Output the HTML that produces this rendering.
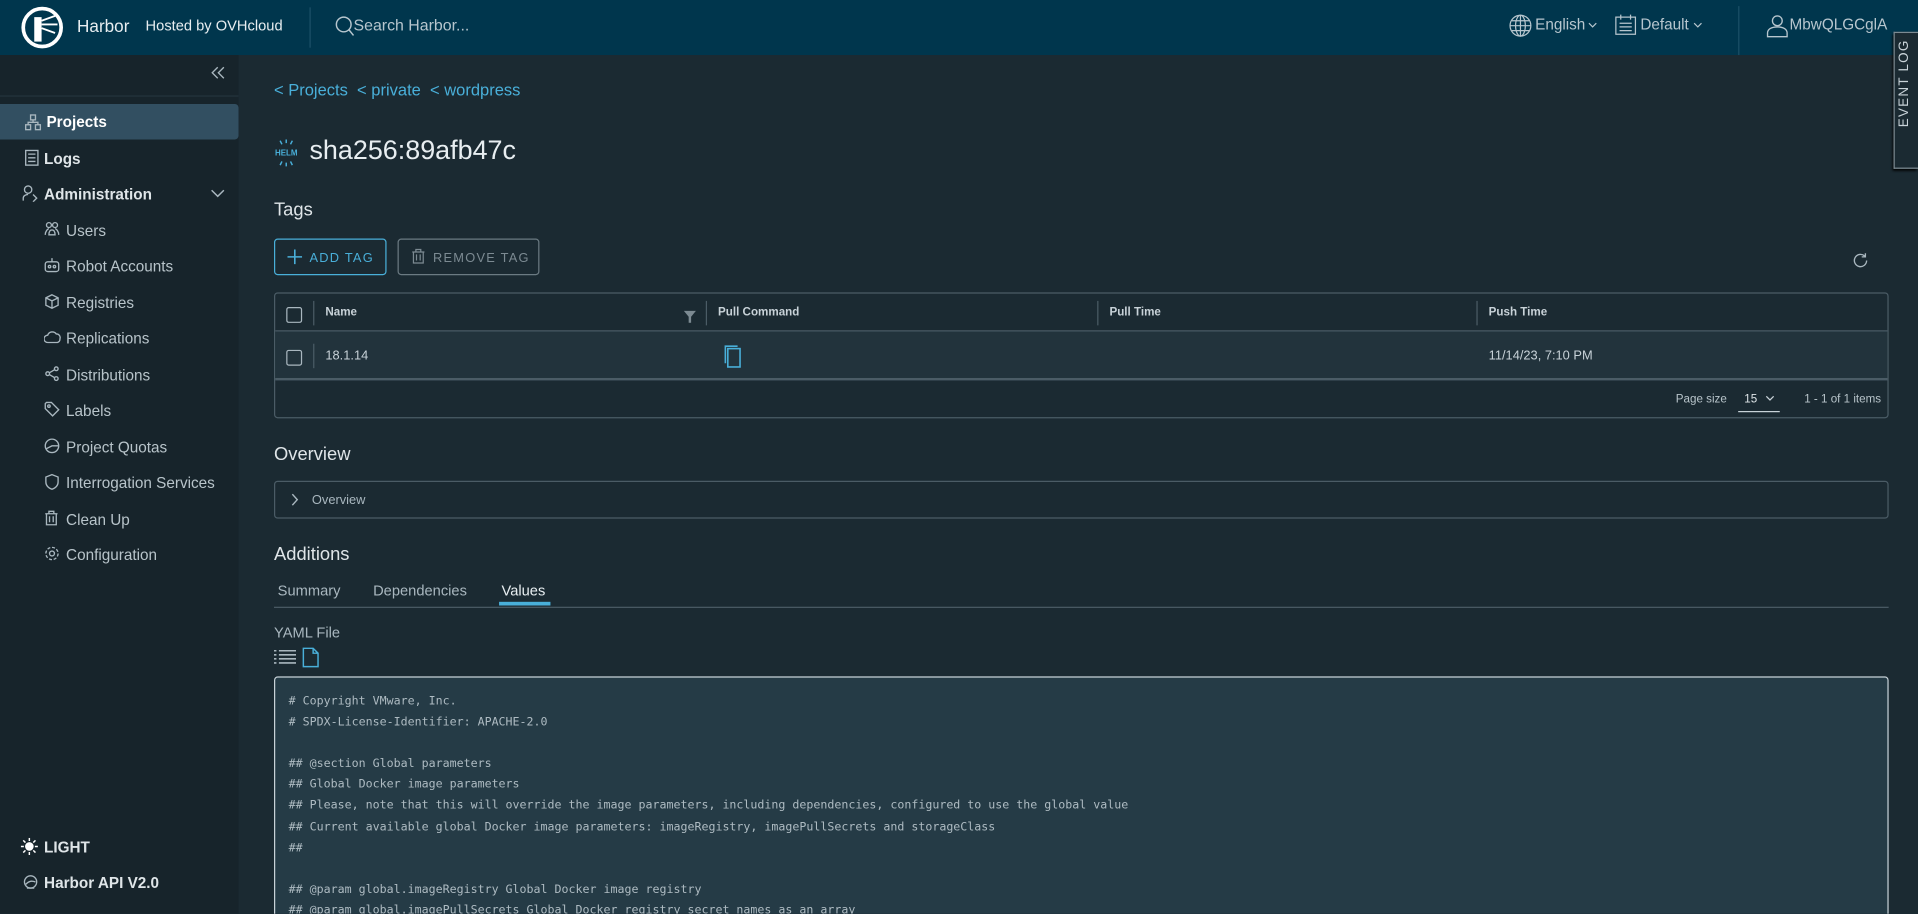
<!DOCTYPE html>
<html><head><meta charset="utf-8">
<style>
*{box-sizing:border-box;margin:0;padding:0}
html,body{width:1918px;height:914px;overflow:hidden;background:#1b2a32}
#w{position:absolute;left:0;top:0;width:1568px;height:747px;transform:scale(1.22321);transform-origin:0 0;font-family:"Liberation Sans",sans-serif;color:#c8d2d8;background:#1b2a32;overflow:hidden}
.hdr{position:absolute;left:0;top:0;width:1568px;height:45px;background:#00364d}
.side{position:absolute;left:0;top:45px;width:195px;height:702px;background:#17242b}
.a{position:absolute;white-space:nowrap}
.nav{position:absolute;left:36px;font-size:12.5px;color:#c8d2d8}
.sub{position:absolute;left:54px;font-size:12.5px;color:#b8c4ca}
.ic{position:absolute;stroke:#a9b7bf;fill:none;stroke-width:1.1}
.blue{color:#49afd9}
.box{position:absolute;border:1px solid #4b5c66;border-radius:3px}
.mono{font-family:"DejaVu Sans Mono","Liberation Mono",monospace;font-size:9.5px;color:#aebbc2;position:absolute;left:236px;white-space:pre}
.cb{position:absolute;width:13px;height:13px;border:1px solid #a9b7bf;border-radius:2px}
</style></head><body><div id="w">
<div class="hdr">
 <svg class="a" style="left:17px;top:5px" width="35" height="35" viewBox="0 0 35 35"><circle cx="17.5" cy="17.5" r="15.5" fill="none" stroke="#fff" stroke-width="3"/><rect x="11" y="9" width="6" height="20" fill="#fff"/><path d="M17 12 L28 8 M17 15 L30 15 M17 18 L28 22" stroke="#fff" stroke-width="1.5"/></svg>
 <div class="a" style="left:63px;top:13px;font-size:14px;color:#e8eef1">Harbor</div>
 <div class="a" style="left:119px;top:14px;font-size:12px;color:#e8eef1">Hosted by OVHcloud</div>
 <div class="a" style="left:253px;top:6px;width:1px;height:33px;background:#1c5068"></div>
 <svg class="a" style="left:273px;top:12px" width="18" height="18" viewBox="0 0 18 18"><circle cx="8" cy="8" r="6" fill="none" stroke="#b7c6ce" stroke-width="1.2"/><path d="M12 12 L16 17" stroke="#b7c6ce" stroke-width="1.2"/></svg>
 <div class="a" style="left:289px;top:13px;font-size:13px;color:#b7c6ce">Search Harbor...</div>
 <svg class="a" style="left:1233px;top:11px" width="20" height="20" viewBox="0 0 20 20" fill="none" stroke="#b7c6ce" stroke-width="1"><circle cx="10" cy="10" r="8.5"/><ellipse cx="10" cy="10" rx="4" ry="8.5"/><path d="M1.5 10H18.5M3 6H17M3 14H17M10 1.5V18.5"/></svg>
 <div class="a" style="left:1255px;top:13px;font-size:12.5px;color:#b7c6ce">English</div>
 <svg class="a" style="left:1298px;top:18px" width="8" height="6" viewBox="0 0 8 6" fill="none" stroke="#b7c6ce"><path d="M1 1l3 3 3-3"/></svg>
 <svg class="a" style="left:1320px;top:11px" width="18" height="18" viewBox="0 0 18 18" fill="none" stroke="#b7c6ce" stroke-width="1"><rect x="1" y="3" width="16" height="14"/><path d="M5 1v4M13 1v4M4 8h10M4 11h10M4 14h10"/></svg>
 <div class="a" style="left:1341px;top:13px;font-size:12.5px;color:#b7c6ce">Default</div>
 <svg class="a" style="left:1384px;top:18px" width="8" height="6" viewBox="0 0 8 6" fill="none" stroke="#b7c6ce"><path d="M1 1l3 3 3-3"/></svg>
 <div class="a" style="left:1421px;top:5px;width:1px;height:40px;background:#1c5068"></div>
 <svg class="a" style="left:1444px;top:11px" width="18" height="20" viewBox="0 0 18 20" fill="none" stroke="#b7c6ce" stroke-width="1.1"><circle cx="9" cy="6" r="4"/><path d="M1 19v-3c0-3 3-5 8-5s8 2 8 5v3z"/></svg>
 <div class="a" style="left:1463px;top:13px;font-size:12.5px;color:#b7c6ce">MbwQLGCglA</div>
</div>
<div class="a" style="left:1548px;top:26px;width:20px;height:112px;background:#1b2a32;border:1px solid #7c8a92;border-right:none;box-shadow:-1px 2px 2px #000"></div>
<div class="a" style="left:1551px;top:104px;font-size:11px;letter-spacing:1px;color:#c8d2d8;transform:rotate(-90deg);transform-origin:0 0">EVENT LOG</div>
<div class="side">
 <svg class="a" style="left:172px;top:9px" width="12" height="11" viewBox="0 0 12 11" fill="none" stroke="#a9b7bf" stroke-width="1.1"><path d="M6 1L1.5 5.5 6 10M11 1L6.5 5.5 11 10"/></svg>
 <div class="a" style="left:0;top:33px;width:195px;height:1px;background:#25343c"></div>
 <div class="a" style="left:0;top:40px;width:195px;height:29px;background:#324f61;border-radius:0 3px 3px 0"></div>
 <svg class="ic" style="left:20px;top:48px" width="14" height="14" viewBox="0 0 14 14"><rect x="5" y="1" width="4" height="4"/><rect x="1" y="9" width="4" height="4"/><rect x="9" y="9" width="4" height="4"/><path d="M7 5v2M3 9V7h8v2"/></svg>
 <div class="nav" style="left:38px;top:48px;font-weight:bold;color:#fff">Projects</div>
 <svg class="ic" style="left:20px;top:77px" width="12" height="14" viewBox="0 0 12 14"><rect x="1" y="1" width="10" height="12"/><path d="M3 4h6M3 7h6M3 10h6"/></svg>
 <div class="nav" style="top:78px;font-weight:bold;color:#dfe5e8">Logs</div>
 <svg class="ic" style="left:18px;top:106px" width="14" height="14" viewBox="0 0 14 14"><circle cx="5" cy="4" r="3"/><path d="M1 13v-2c0-2 2-3 4-3M9 8l3 3-3 3"/></svg>
 <div class="nav" style="top:107px;font-weight:bold;color:#dfe5e8">Administration</div>
 <svg class="a" style="left:172px;top:109px" width="12" height="8" viewBox="0 0 12 8" fill="none" stroke="#a9b7bf" stroke-width="1.2"><path d="M1 1.5l5 5 5-5"/></svg>
 <svg class="ic" style="left:36px;top:136px" width="13" height="12" viewBox="0 0 13 12"><circle cx="4" cy="3" r="2"/><circle cx="9" cy="3" r="2"/><path d="M1 11c0-3 2-5 3-5M12 11c0-3-2-5-3-5M4 11c0-3 1-4 2.5-4S9 8 9 11z"/></svg>
 <div class="sub" style="top:137px">Users</div>
 <svg class="ic" style="left:36px;top:165px" width="13" height="13" viewBox="0 0 13 13"><rect x="1" y="4" width="11" height="8" rx="2"/><path d="M6.5 1v3"/><circle cx="4.5" cy="8" r="1"/><circle cx="8.5" cy="8" r="1"/></svg>
 <div class="sub" style="top:166px">Robot Accounts</div>
 <svg class="ic" style="left:36px;top:195px" width="13" height="13" viewBox="0 0 13 13"><path d="M6.5 1l5 2.5v6l-5 2.5-5-2.5v-6zM1.5 3.5l5 2.5 5-2.5M6.5 6v6"/></svg>
 <div class="sub" style="top:196px">Registries</div>
 <svg class="ic" style="left:36px;top:225px" width="14" height="12" viewBox="0 0 14 12"><path d="M3 10a3 3 0 010-6 4 4 0 017-1 3 3 0 013 4 3 3 0 01-2 3z"/></svg>
 <div class="sub" style="top:225px">Replications</div>
 <svg class="ic" style="left:36px;top:254px" width="13" height="13" viewBox="0 0 13 13"><circle cx="3" cy="6.5" r="1.5"/><circle cx="10" cy="2.5" r="1.5"/><circle cx="10" cy="10.5" r="1.5"/><path d="M4.3 5.8L8.7 3.2M4.3 7.2L8.7 9.8"/></svg>
 <div class="sub" style="top:255px">Distributions</div>
 <svg class="ic" style="left:36px;top:283px" width="13" height="13" viewBox="0 0 13 13"><path d="M1 2v4l6 6 5-5-6-6H2z"/><circle cx="4" cy="4" r="1"/></svg>
 <div class="sub" style="top:284px">Labels</div>
 <svg class="ic" style="left:36px;top:313px" width="13" height="13" viewBox="0 0 13 13"><circle cx="6.5" cy="6.5" r="5.5"/><path d="M1.5 9L6.5 6.5l5 0"/></svg>
 <div class="sub" style="top:314px">Project Quotas</div>
 <svg class="ic" style="left:36px;top:342px" width="13" height="14" viewBox="0 0 13 14"><path d="M6.5 1l5 2v4c0 3-2.5 5-5 6-2.5-1-5-3-5-6V3z"/></svg>
 <div class="sub" style="top:343px">Interrogation Services</div>
 <svg class="ic" style="left:36px;top:372px" width="12" height="13" viewBox="0 0 12 13"><path d="M1 3h10M4 3V1h4v2M2 3v9h8V3M4.5 5v5M7.5 5v5"/></svg>
 <div class="sub" style="top:373px">Clean Up</div>
 <svg class="ic" style="left:36px;top:401px" width="13" height="13" viewBox="0 0 13 13"><circle cx="6.5" cy="6.5" r="2"/><circle cx="6.5" cy="6.5" r="5" stroke-dasharray="2.5 1.4"/></svg>
 <div class="sub" style="top:402px">Configuration</div>
 <svg class="a" style="left:17px;top:640px" width="14" height="14" viewBox="0 0 14 14"><circle cx="7" cy="7" r="3.5" fill="#fff"/><path d="M7 0v2.5M7 11.5V14M0 7h2.5M11.5 7H14M2 2l1.8 1.8M10.2 10.2L12 12M2 12l1.8-1.8M10.2 3.8L12 2" stroke="#fff" stroke-width="1.2"/></svg>
 <div class="nav" style="top:641px;font-weight:bold;color:#dfe5e8">LIGHT</div>
 <svg class="ic" style="left:19px;top:670px" width="12" height="12" viewBox="0 0 12 12"><circle cx="6" cy="6" r="5"/><path d="M2 8c3-3 5-3 8-2M3 11h6"/></svg>
 <div class="nav" style="top:670px;font-weight:bold;color:#dfe5e8">Harbor API V2.0</div>
</div>

<div class="a blue" style="left:224px;top:66px;font-size:13.5px">&lt; Projects&nbsp;&nbsp;&lt; private&nbsp;&nbsp;&lt; wordpress</div>
<svg class="a" style="left:223px;top:113px" width="22" height="24" viewBox="0 0 22 24"><path d="M11 1v3M6 2l1.5 3M16 2l-1.5 3M11 23v-3M6 22l1.5-3M16 22l-1.5-3" stroke="#49afd9" stroke-width="1.2"/><text x="11" y="14" font-size="6.5" font-family="Liberation Sans" font-weight="bold" fill="#49afd9" text-anchor="middle">HELM</text></svg>
<div class="a" style="left:253px;top:110px;font-size:22px;color:#e8eef1">sha256:89afb47c</div>
<div class="a" style="left:224px;top:163px;font-size:15px;color:#dfe5e8">Tags</div>
<div class="a" style="left:224px;top:195px;width:92px;height:30px;border:1px solid #49afd9;border-radius:3px;color:#49afd9;font-size:10.5px;letter-spacing:1px;padding:9px 0 0 28px">ADD TAG</div>
<svg class="a" style="left:235px;top:204px" width="12" height="12" viewBox="0 0 12 12" stroke="#49afd9" stroke-width="1.3"><path d="M6 0v12M0 6h12"/></svg>
<div class="a" style="left:325px;top:195px;width:116px;height:30px;border:1px solid #6b7a82;border-radius:3px;color:#7c8a92;font-size:10.5px;letter-spacing:1px;padding:9px 0 0 28px">REMOVE TAG</div>
<svg class="a" style="left:336px;top:203px" width="12" height="13" viewBox="0 0 12 13" fill="none" stroke="#7c8a92"><path d="M1 3h10M4 3V1h4v2M2 3v9h8V3M4.5 5v5M7.5 5v5"/></svg>
<svg class="a" style="left:1514px;top:206px" width="14" height="14" viewBox="0 0 14 14" fill="none" stroke="#a9b7bf" stroke-width="1.1"><path d="M12 7a5 5 0 1 1-1.5-3.6M11 1v3H8"/></svg>

<div class="box" style="left:224px;top:239px;width:1320px;height:103px"></div>
<div class="a" style="left:225px;top:270px;width:1318px;height:1px;background:#4b5c66"></div>
<div class="a" style="left:225px;top:271px;width:1318px;height:38px;background:#22333c"></div>
<div class="a" style="left:225px;top:309px;width:1318px;height:2px;background:#4b5c66"></div>
<div class="cb" style="left:234px;top:251px"></div>
<div class="cb" style="left:234px;top:286px"></div>
<div class="a" style="left:256px;top:246px;width:1px;height:20px;background:#4b5c66"></div>
<div class="a" style="left:256px;top:281px;width:1px;height:20px;background:#4b5c66"></div>
<div class="a" style="left:577px;top:246px;width:1px;height:20px;background:#4b5c66"></div>
<div class="a" style="left:897px;top:246px;width:1px;height:20px;background:#4b5c66"></div>
<div class="a" style="left:1207px;top:246px;width:1px;height:20px;background:#4b5c66"></div>
<div class="a" style="left:266px;top:250px;font-size:9.5px;font-weight:bold;color:#c8d2d8">Name</div>
<svg class="a" style="left:559px;top:254px" width="10" height="10" viewBox="0 0 10 10"><path d="M0 0h10L6 5v5H4V5z" fill="#7c8a92"/></svg>
<div class="a" style="left:587px;top:250px;font-size:9.5px;font-weight:bold;color:#c8d2d8">Pull Command</div>
<div class="a" style="left:907px;top:250px;font-size:9.5px;font-weight:bold;color:#c8d2d8">Pull Time</div>
<div class="a" style="left:1217px;top:250px;font-size:9.5px;font-weight:bold;color:#c8d2d8">Push Time</div>
<div class="a" style="left:266px;top:285px;font-size:10.5px;color:#c8d2d8">18.1.14</div>
<svg class="a" style="left:590px;top:281px" width="18" height="20" viewBox="0 0 18 20" fill="none" stroke="#49afd9" stroke-width="1.3"><path d="M3 16V2h10"/><rect x="5" y="4" width="10" height="15"/></svg>
<div class="a" style="left:1217px;top:285px;font-size:10.5px;color:#c8d2d8">11/14/23, 7:10 PM</div>
<div class="a" style="left:1370px;top:321px;font-size:9.5px;color:#b8c4ca">Page size</div>
<div class="a" style="left:1421px;top:321px;width:34px;height:16px;border-bottom:1px solid #c8d2d8;font-size:9.5px;color:#dfe5e8;padding-left:5px">15</div>
<svg class="a" style="left:1443px;top:323px" width="8" height="5" viewBox="0 0 8 5" fill="none" stroke="#c8d2d8"><path d="M1 1l3 3 3-3"/></svg>
<div class="a" style="left:1475px;top:321px;font-size:9.5px;color:#b8c4ca">1 - 1 of 1 items</div>

<div class="a" style="left:224px;top:363px;font-size:15px;color:#dfe5e8">Overview</div>
<div class="box" style="left:224px;top:393px;width:1320px;height:31px"></div>
<svg class="a" style="left:238px;top:403px" width="6" height="11" viewBox="0 0 6 11" fill="none" stroke="#a9b7bf" stroke-width="1.2"><path d="M1 1l4 4.5L1 10"/></svg>
<div class="a" style="left:255px;top:403px;font-size:10.5px;color:#a9b7bf">Overview</div>

<div class="a" style="left:224px;top:445px;font-size:15px;color:#dfe5e8">Additions</div>
<div class="a" style="left:227px;top:476px;font-size:12px;color:#a9b7bf">Summary</div>
<div class="a" style="left:305px;top:476px;font-size:12px;color:#a9b7bf">Dependencies</div>
<div class="a" style="left:410px;top:476px;font-size:12px;color:#e8eef1">Values</div>
<div class="a" style="left:408px;top:492px;width:42px;height:3px;background:#49afd9"></div>
<div class="a" style="left:224px;top:496px;width:1320px;height:1px;background:#4b5c66"></div>
<div class="a" style="left:224px;top:510px;font-size:12px;color:#a9b7bf">YAML File</div>
<svg class="a" style="left:224px;top:531px" width="18" height="12" viewBox="0 0 18 12" stroke="#a9b7bf" stroke-width="1.3"><path d="M0 1h2M4 1h14M0 4.3h2M4 4.3h14M0 7.6h2M4 7.6h14M0 11h2M4 11h14"/></svg>
<svg class="a" style="left:247px;top:529px" width="14" height="17" viewBox="0 0 14 17" fill="none" stroke="#49afd9" stroke-width="1.2"><path d="M1 1h8l4 4v11H1zM9 1v4h4"/></svg>
<div class="a" style="left:224px;top:553px;width:1320px;height:200px;background:#253b46;border:1px solid #c8d2d8;border-radius:3px"></div>
<div class="mono" style="top:568px"># Copyright VMware, Inc.</div>
<div class="mono" style="top:585px"># SPDX-License-Identifier: APACHE-2.0</div>
<div class="mono" style="top:619px">## @section Global parameters</div>
<div class="mono" style="top:636px">## Global Docker image parameters</div>
<div class="mono" style="top:653px">## Please, note that this will override the image parameters, including dependencies, configured to use the global value</div>
<div class="mono" style="top:671px">## Current available global Docker image parameters: imageRegistry, imagePullSecrets and storageClass</div>
<div class="mono" style="top:688px">##</div>
<div class="mono" style="top:722px">## @param global.imageRegistry Global Docker image registry</div>
<div class="mono" style="top:739px">## @param global.imagePullSecrets Global Docker registry secret names as an array</div>
</div></body></html>
